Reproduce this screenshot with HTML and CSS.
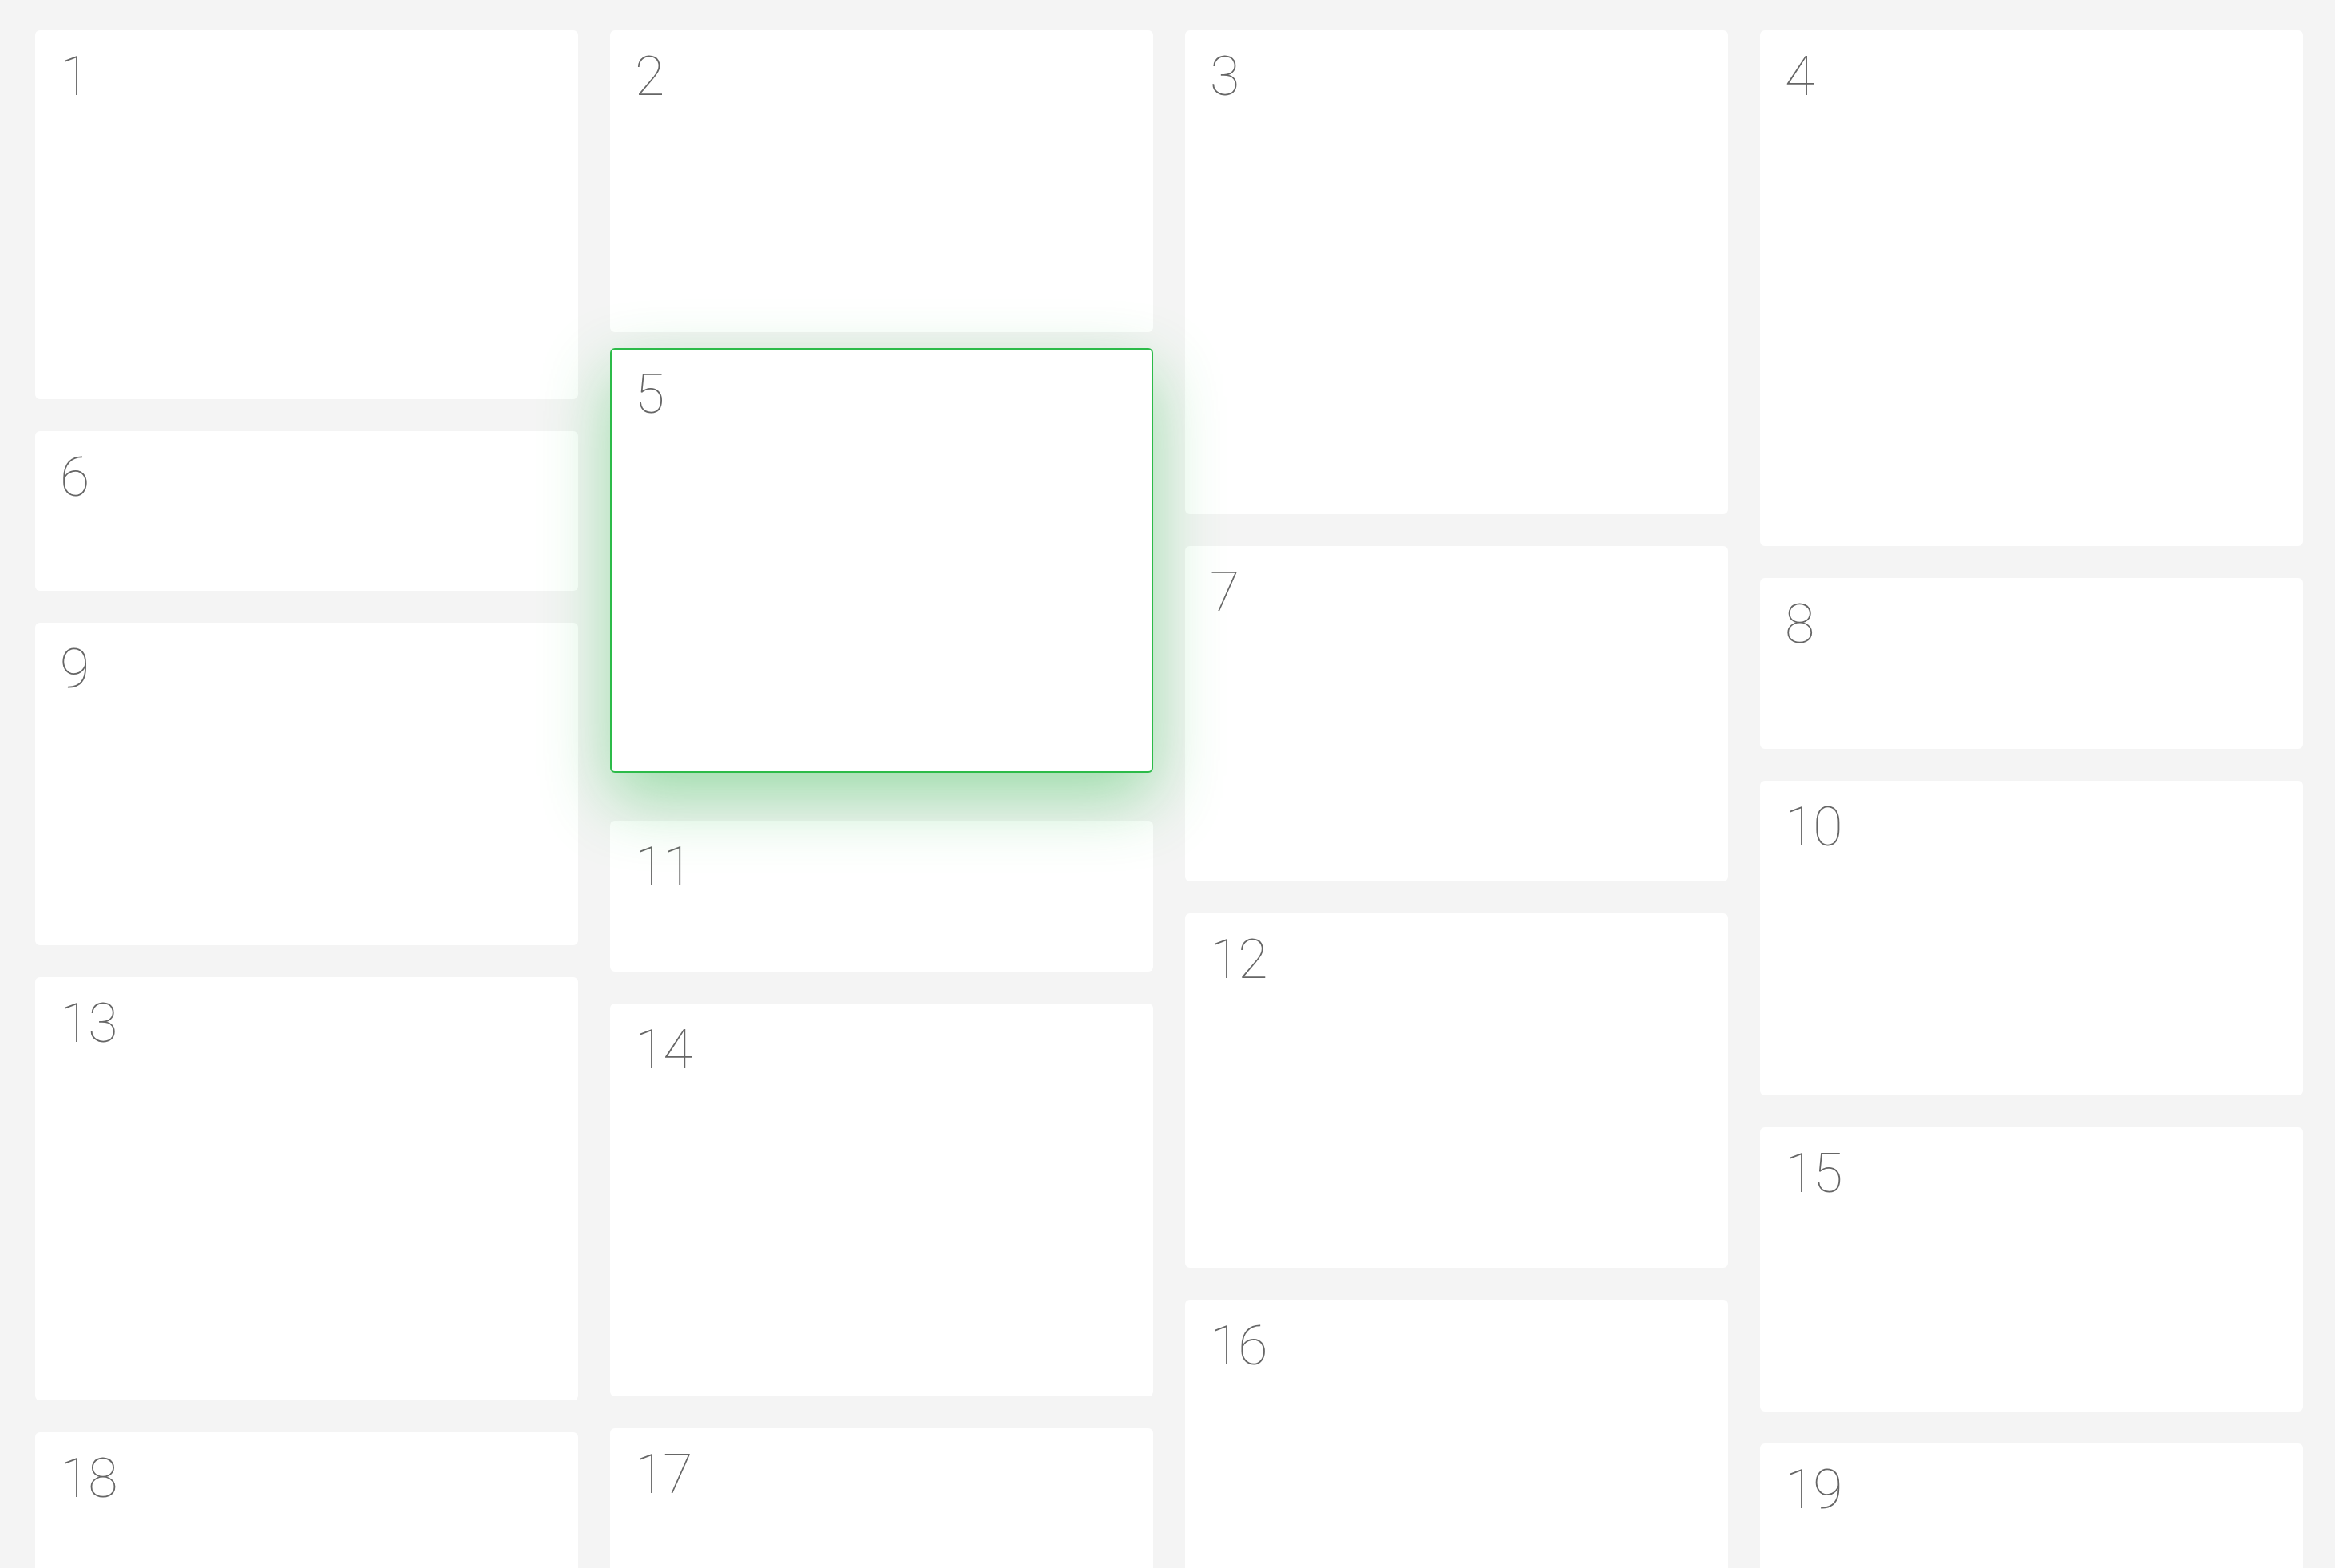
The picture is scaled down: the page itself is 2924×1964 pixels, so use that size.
FILE: index.html
```html
<!DOCTYPE html>
<html lang="en">
<head>
<meta charset="utf-8">
<title>Masonry</title>
<link rel="stylesheet" href="styles.css">
</head>
<body>
<main class="board">
  <div class="col">
    <div class="card" style="height:462px"><span class="num">1</span></div>
    <div class="card" style="height:200px"><span class="num">6</span></div>
    <div class="card" style="height:404px"><span class="num">9</span></div>
    <div class="card" style="height:530px"><span class="num">13</span></div>
    <div class="card" style="height:320px"><span class="num">18</span></div>
  </div>
  <div class="col">
    <div class="card" style="height:378px"><span class="num">2</span></div>
    <div class="card card-active" style="height:532px"><span class="num">5</span></div>
    <div class="card" style="height:189px"><span class="num">11</span></div>
    <div class="card" style="height:492px"><span class="num">14</span></div>
    <div class="card" style="height:320px"><span class="num">17</span></div>
  </div>
  <div class="col">
    <div class="card" style="height:606px"><span class="num">3</span></div>
    <div class="card" style="height:420px"><span class="num">7</span></div>
    <div class="card" style="height:444px"><span class="num">12</span></div>
    <div class="card" style="height:420px"><span class="num">16</span></div>
  </div>
  <div class="col">
    <div class="card" style="height:646px"><span class="num">4</span></div>
    <div class="card" style="height:214px"><span class="num">8</span></div>
    <div class="card" style="height:394px"><span class="num">10</span></div>
    <div class="card" style="height:356px"><span class="num">15</span></div>
    <div class="card" style="height:320px"><span class="num">19</span></div>
  </div>
</main>
</body>
</html>
```

FILE: styles.css
```css
html, body {
  margin: 0;
  padding: 0;
  height: 100%;
  overflow: hidden;
  background: #f4f4f4;
}

.board {
  display: flex;
  align-items: flex-start;
  gap: 40px;
  padding: 38px 40px 0 44px;
  box-sizing: border-box;
  width: 100%;
}

.col {
  flex: 1 1 0;
  min-width: 0;
  display: flex;
  flex-direction: column;
  gap: 40px;
}

.card {
  box-sizing: border-box;
  background: #ffffff;
  border-radius: 6px;
  padding: 24px 31px;
  flex: none;
}

.num {
  display: block;
  font-family: Roboto, "Helvetica Neue", "Liberation Sans", sans-serif;
  font-weight: 100;
  font-size: 68px;
  line-height: 1;
  letter-spacing: -2px;
  color: #666666;
}

.card-active {
  border: 2px solid #2cbb49;
  padding: 22px 29px;
  transform: translateY(-20px);
  box-shadow: 0 32px 84px rgba(45, 190, 75, 0.45);
}
```
